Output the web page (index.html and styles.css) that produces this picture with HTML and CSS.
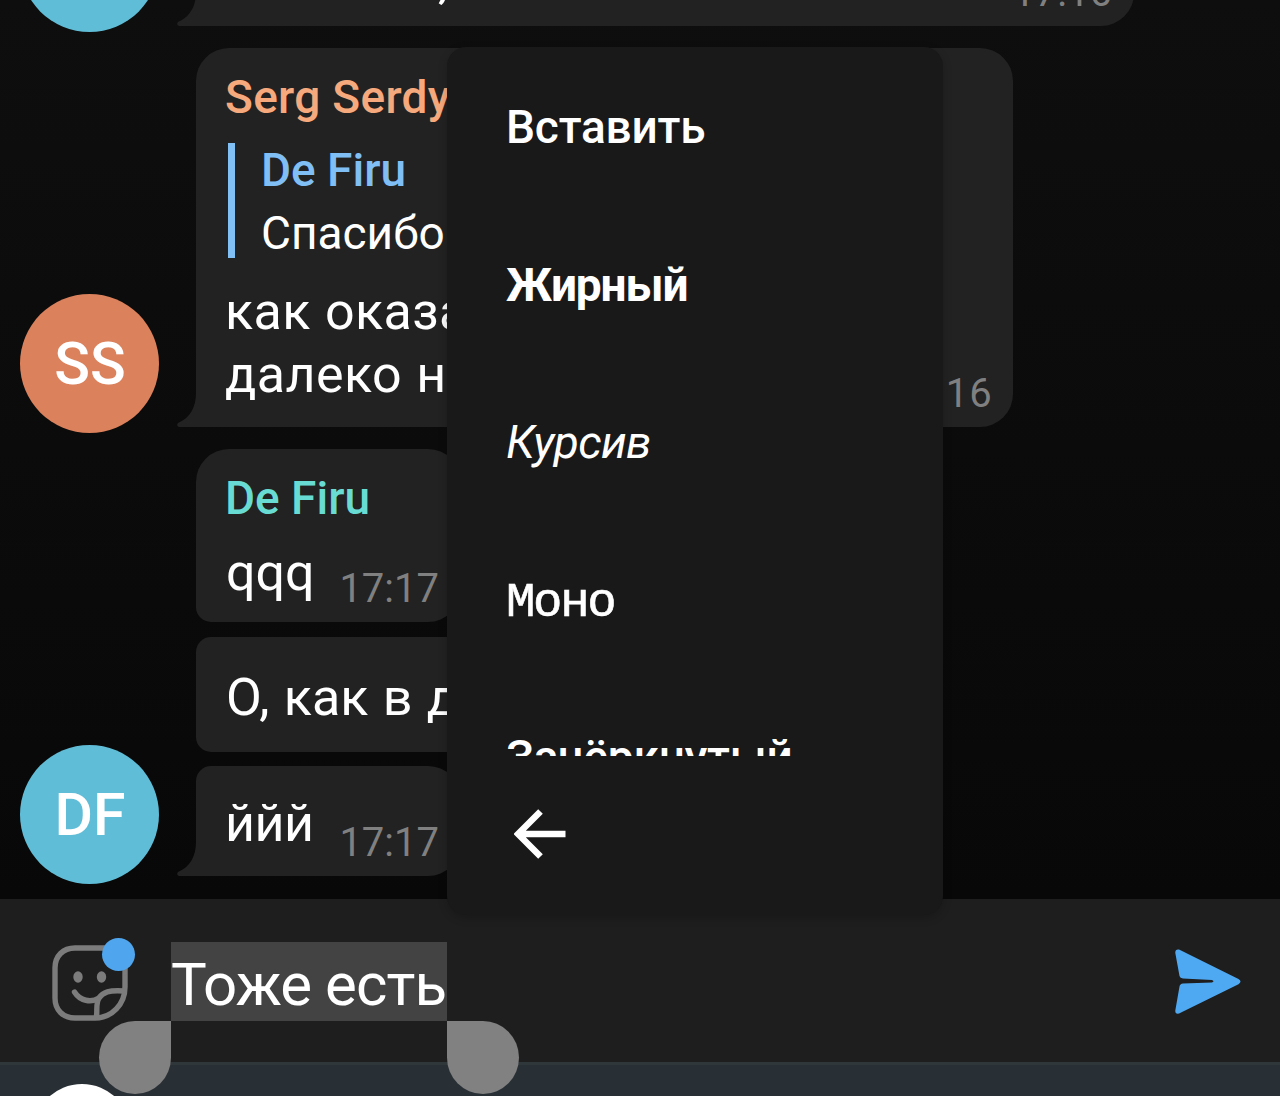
FILE: index.html
```html
<!DOCTYPE html>
<html lang="ru">
<head>
  <meta charset="UTF-8">
  <meta name="viewport" content="width=device-width, initial-scale=1.0">
  <title>Чат</title>
  <link rel="stylesheet" href="styles.css">
</head>
<body>
  <div class="screen">
    <main class="chat">
      <div class="group group-cut">
        <div class="avatar blue"></div>
        <div class="bubbles">
          <div class="bubble last cut">
            <svg class="tail" viewBox="0 0 20 34"><path d="M19 0C19 14 13 25 1 30Q-1 33 2 34H20V0Z" fill="#222"/></svg>
            <p class="text">,</p>
            <span class="time">17:16</span>
          </div>
        </div>
      </div>

      <div class="group">
        <div class="avatar orange">SS</div>
        <div class="bubbles">
          <div class="bubble first last long">
            <svg class="tail" viewBox="0 0 20 34"><path d="M19 0C19 14 13 25 1 30Q-1 33 2 34H20V0Z" fill="#222"/></svg>
            <div class="name peach">Serg Serdy</div>
            <div class="reply">
              <div class="reply-name">De Firu</div>
              <div class="reply-text">Спасибо</div>
            </div>
            <p class="text">как оказа<br>далеко н</p>
            <span class="time">17:16</span>
          </div>
        </div>
      </div>

      <div class="group">
        <div class="avatar blue low">DF</div>
        <div class="bubbles">
          <div class="bubble first named">
            <div class="name teal">De Firu</div>
            <p class="text">qqq</p>
            <span class="time">17:17</span>
          </div>
          <div class="bubble middle">
            <p class="text">О, как в д</p>
          </div>
          <div class="bubble last short">
            <svg class="tail" viewBox="0 0 20 34"><path d="M19 0C19 14 13 25 1 30Q-1 33 2 34H20V0Z" fill="#222"/></svg>
            <p class="text">ййй</p>
            <span class="time">17:17</span>
          </div>
        </div>
      </div>
    </main>

    <footer class="composer">
      <div class="sticker">
        <svg width="76" height="76" viewBox="0 0 76 76" fill="none" stroke="#7c7c7c" stroke-width="5.4" stroke-linecap="round" stroke-linejoin="round">
          <path d="M43 73H23C11 73 3 65 3 53V23C3 11 11 3 23 3H53C65 3 73 11 73 23V42C73 59 60 73 43 73Z"/>
          <path d="M22.500 47C28 56 39 58 47 53C51 47 57 45 72 46"/>
          <path d="M47 53C43.500 59 45.500 65 44.500 71"/>
          <ellipse cx="26" cy="32" rx="4.700" ry="5.700" fill="#7c7c7c" stroke="none"/>
          <ellipse cx="49.500" cy="32" rx="4.700" ry="5.700" fill="#7c7c7c" stroke="none"/>
        </svg>
        <span class="dot"></span>
      </div>
      <div class="field">
        <span class="selected">Тоже есть</span>
        <span class="handle handle-start"></span>
        <span class="handle handle-end"></span>
      </div>
      <svg class="send" width="66" height="66" viewBox="0 0 66 66">
        <path d="M4 0.600L63.500 30Q67.500 32.500 63.500 35.200L4 64.600Q0 65.500 0.300 61.500L4.500 37.500Q5 34.600 8 34.400L37 33.500Q40 32.400 37 31.100L8 29.500Q5 29.300 4.500 27L0.300 4Q0 0 4 0.600Z" fill="#4fa9f2"/>
      </svg>
    </footer>

    <div class="panel">
      <div class="panel-button"></div>
    </div>

    <div class="menu">
      <div class="menu-list">
        <div class="item">Вставить</div>
        <div class="item bold">Жирный</div>
        <div class="item italic">Курсив</div>
        <div class="item mono">Моно</div>
        <div class="item">Зачёркнутый</div>
      </div>
      <div class="back">
        <svg width="52" height="50" viewBox="0 0 52 50" fill="none" stroke="#fff" stroke-width="6.500">
          <path d="M51.500 25H5M26.500 2.500L4 25L26.500 47.500"/>
        </svg>
      </div>
    </div>
  </div>
</body>
</html>
```
FILE: styles.css
```css
* {
  box-sizing: border-box;
}
body {
  margin: 0;
  font-family: Roboto, "Noto Sans", sans-serif;
  color: #fff;
  background: #0a0a0a;
}
.screen {
  position: relative;
  width: 1280px;
  height: 1096px;
  overflow: hidden;
  display: flex;
  flex-direction: column;
}

/* messages */
.chat {
  height: 899px;
  overflow: hidden;
  display: flex;
  flex-direction: column;
  gap: 22px;
  padding-left: 20px;
  background: linear-gradient(#0e0e0e, #080808);
}
.group {
  display: flex;
  align-items: flex-end;
  gap: 37px;
  flex-shrink: 0;
}
.group-cut {
  margin-top: -174px;
}
.avatar {
  width: 139px;
  height: 139px;
  border-radius: 50%;
  margin-bottom: -6px;
  padding-left: 1px;
  display: flex;
  align-items: center;
  justify-content: center;
  font-size: 59px;
  font-weight: 500;
}
.avatar.low {
  margin-bottom: -8px;
}
.blue {
  background: #60bdd7;
}
.orange {
  background: #db815c;
}
.bubbles {
  display: flex;
  flex-direction: column;
  align-items: flex-start;
  gap: 14.5px;
}
.bubble {
  position: relative;
  background: #222;
  border-radius: 15px 33px 33px 15px;
  padding: 0 30px;
}
.bubble.first {
  border-top-left-radius: 33px;
}
.bubble.last {
  border-bottom-left-radius: 0;
}
.cut {
  width: 938px;
  height: 200px;
  padding: 123px 0 0 242px;
}
.long {
  width: 817px;
  height: 379px;
  padding-top: 22px;
}
.named {
  width: 265px;
  height: 173px;
  padding-top: 22px;
}
.middle {
  width: 560px;
  height: 115px;
  padding-top: 29px;
}
.short {
  width: 265px;
  height: 110px;
  padding-top: 26px;
}
.tail {
  position: absolute;
  left: -19px;
  bottom: 0;
  width: 20px;
  height: 34px;
}
.name {
  margin-left: -1px;
  font-size: 46px;
  font-weight: 500;
  line-height: 54px;
  white-space: nowrap;
}
.peach {
  color: #f6a97c;
  letter-spacing: 0.3px;
}
.teal {
  color: #68dcd3;
}
.reply {
  margin: 19px 0 22px 2px;
  padding-left: 26px;
  height: 115px;
  border-left: 7px solid #80c0f5;
  font-size: 46px;
  line-height: 64px;
}
.reply-name {
  padding-top: 1px;
  height: 58px;
  line-height: 53px;
  font-weight: 500;
  color: #80bff5;
}
.text {
  margin: 0;
  font-size: 52px;
  line-height: 63px;
  word-spacing: 1.5px;
  white-space: nowrap;
}
.long .text {
  margin-left: -1px;
  letter-spacing: 0.4px;
  word-spacing: 1px;
}
.named .text {
  margin-top: 16px;
}
.short .text {
  margin-left: -1px;
  letter-spacing: -0.5px;
}
.time {
  position: absolute;
  right: 22px;
  bottom: 9px;
  font-size: 40px;
  line-height: 48px;
  color: #808080;
}
.long .time {
  right: 20px;
  letter-spacing: 1.2px;
}

/* input bar */
.composer {
  height: 163px;
  background: #1e1e1e;
  display: flex;
  align-items: flex-start;
}
.sticker {
  position: relative;
  width: 76px;
  height: 76px;
  margin: 46px 0 0 52px;
}
.dot {
  position: absolute;
  top: -7px;
  right: -7px;
  width: 33px;
  height: 33px;
  border-radius: 50%;
  background: #4fa6ee;
}
.field {
  position: relative;
  width: 276px;
  margin: 43px 0 0 43px;
}
.selected {
  display: block;
  height: 79px;
  background: #434343;
  font-size: 60px;
  line-height: 85px;
  letter-spacing: -0.9px;
  white-space: nowrap;
}
.handle {
  position: absolute;
  top: 79px;
  z-index: 1;
  width: 72px;
  height: 73px;
  background: #818181;
}
.handle-start {
  right: 100%;
  border-radius: 50% 0 50% 50%;
}
.handle-end {
  left: 100%;
  border-radius: 0 50% 50% 50%;
}
.send {
  margin: 50px 39px 0 auto;
}

.panel {
  height: 34px;
  overflow: hidden;
  background: #293035;
  border-top: 3px solid #30373b;
}
.panel-button {
  width: 98px;
  height: 98px;
  margin: 19px 0 0 33px;
  border-radius: 50%;
  background: #fff;
}

/* text selection popup */
.menu {
  position: absolute;
  left: 447px;
  top: 47px;
  width: 496px;
  height: 868px;
  border-radius: 19px;
  background: #191919;
  box-shadow: 0 3px 10px rgba(0, 0, 0, 0.2);
}
.menu-list {
  height: 709px;
  padding-top: 2px;
  overflow: hidden;
}
.item {
  height: 157.5px;
  padding-left: 59px;
  font-size: 46px;
  font-weight: 500;
  line-height: 157px;
  letter-spacing: -0.2px;
}
.bold {
  font-weight: 700;
  letter-spacing: -1.1px;
}
.italic {
  font-weight: 400;
  font-style: italic;
  letter-spacing: -0.6px;
}
.mono {
  padding-top: 3px;
  font-family: "Liberation Mono", monospace;
  font-size: 49px;
  font-weight: 400;
  letter-spacing: -2.3px;
  -webkit-text-stroke: 0.6px #fff;
}
.back {
  padding: 53px 0 0 67px;
}
.back svg {
  display: block;
}
```
